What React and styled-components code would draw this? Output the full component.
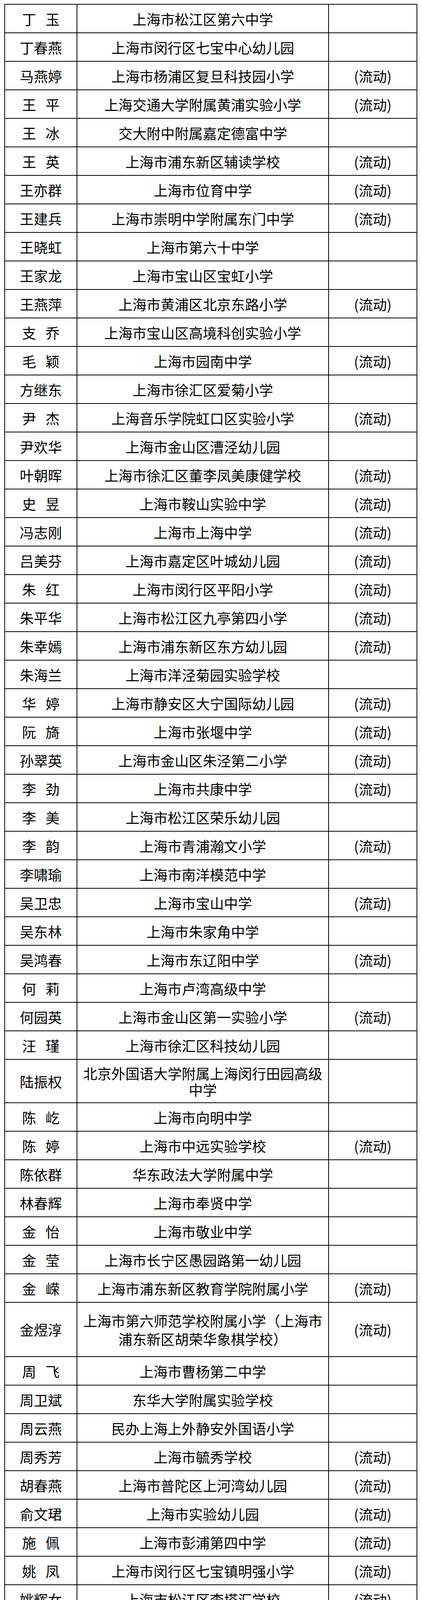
import React from 'react'
import styled, { createGlobalStyle } from 'styled-components'

const FLOW = '(流动)'

// [name, school, note, row height, line height]
const rows = [
    ['丁 玉', '上海市松江区第六中学', ''],
    ['丁春燕', '上海市闵行区七宝中心幼儿园', ''],
    ['马燕婷', '上海市杨浦区复旦科技园小学', FLOW],
    ['王 平', '上海交通大学附属黄浦实验小学', FLOW],
    ['王 冰', '交大附中附属嘉定德富中学', ''],
    ['王 英', '上海市浦东新区辅读学校', FLOW],
    ['王亦群', '上海市位育中学', FLOW],
    ['王建兵', '上海市崇明中学附属东门中学', FLOW],
    ['王晓虹', '上海市第六十中学', ''],
    ['王家龙', '上海市宝山区宝虹小学', ''],
    ['王燕萍', '上海市黄浦区北京东路小学', FLOW],
    ['支 乔', '上海市宝山区高境科创实验小学', ''],
    ['毛 颖', '上海市园南中学', FLOW],
    ['方继东', '上海市徐汇区爱菊小学', ''],
    ['尹 杰', '上海音乐学院虹口区实验小学', FLOW],
    ['尹欢华', '上海市金山区漕泾幼儿园', ''],
    ['叶朝晖', '上海市徐汇区董李凤美康健学校', FLOW],
    ['史 昱', '上海市鞍山实验中学', FLOW],
    ['冯志刚', '上海市上海中学', FLOW],
    ['吕美芬', '上海市嘉定区叶城幼儿园', FLOW],
    ['朱 红', '上海市闵行区平阳小学', FLOW],
    ['朱平华', '上海市松江区九亭第四小学', FLOW],
    ['朱幸嫣', '上海市浦东新区东方幼儿园', FLOW],
    ['朱海兰', '上海市洋泾菊园实验学校', ''],
    ['华 婷', '上海市静安区大宁国际幼儿园', FLOW],
    ['阮 旖', '上海市张堰中学', FLOW],
    ['孙翠英', '上海市金山区朱泾第二小学', FLOW],
    ['李 劲', '上海市共康中学', FLOW],
    ['李 美', '上海市松江区荣乐幼儿园', ''],
    ['李 韵', '上海市青浦瀚文小学', FLOW],
    ['李啸瑜', '上海市南洋模范中学', ''],
    ['吴卫忠', '上海市宝山中学', FLOW],
    ['吴东林', '上海市朱家角中学', ''],
    ['吴鸿春', '上海市东辽阳中学', FLOW],
    ['何 莉', '上海市卢湾高级中学', ''],
    ['何园英', '上海市金山区第一实验小学', FLOW],
    ['汪 瑾', '上海市徐汇区科技幼儿园', ''],
    ['陆振权', '北京外国语大学附属上海闵行田园高级中学', '', 111],
    ['陈 屹', '上海市向明中学', ''],
    ['陈 婷', '上海市中远实验学校', FLOW],
    ['陈依群', '华东政法大学附属中学', ''],
    ['林春辉', '上海市奉贤中学', ''],
    ['金 怡', '上海市敬业中学', ''],
    ['金 莹', '上海市长宁区愚园路第一幼儿园', ''],
    ['金 嵘', '上海市浦东新区教育学院附属小学', FLOW],
    ['金煜淳', '上海市第六师范学校附属小学（上海市浦东新区胡荣华象棋学校）', FLOW, 139, 47],
    ['周 飞', '上海市曹杨第二中学', ''],
    ['周卫斌', '东华大学附属实验学校', ''],
    ['周云燕', '民办上海上外静安外国语小学', ''],
    ['周秀芳', '上海市毓秀学校', FLOW],
    ['胡春燕', '上海市普陀区上河湾幼儿园', FLOW],
    ['俞文珺', '上海市实验幼儿园', FLOW],
    ['施 佩', '上海市彭浦第四中学', FLOW],
    ['姚 凤', '上海市闵行区七宝镇明强小学', FLOW],
    ['姚辉女', '上海市松江区李塔汇学校', FLOW],
    ['骆 奇', '上海市晋元高级中学附属学校', ''],
    ['顾 文', '上海交通大学附属小学', FLOW],
    ['顾伟毅', '上海市虹口区实验幼儿园', ''],
    ['顾霁昀', '上海市洋泾中学', ''],
    ['钱 芳', '上海市浦东新区福山外国语小学', ''],
    ['钱文华', '上海市徐汇区青少年活动中心', ''],
    ['徐秀清', '上海市青浦佳佳幼儿园', FLOW],
    ['高 洁', '上海市宜川中学', ''],
    ['席 璐', '上海外国语大学尚阳外国语学校', FLOW],
    ['唐月华', '上海市嘉定区清水路小学', FLOW],
    ['唐纪瑛', '上海市信息管理学校', ''],
    ['黄豪芳', '上海市宝山区青苹果幼儿园', ''],
    ['梅宝红', '上海市闵行区七宝第二中学', FLOW],
    ['曹湘瑜', '上海市浦东新区东南幼儿园', FLOW],
    ['董永刚', '上海市上南中学南校', ''],
    ['董永华', '上海第二工业大学附属浦东振华外经职业技术学校', '', 111],
    ['傅 松', '华东政法大学附属中学', ''],
    ['焦 勤', '华东师范大学附属天山学校', FLOW],
    ['谢红新', '上海市松江区民乐学校', FLOW],
    ['管建平', '上海市浦东新区御桥小学', ''],
    ['潘阿芳', '上海金洲小学', ''],
    ['薛志明', '华东师范大学附属东昌中学', ''],
    ['魏 澜', '上海市建平实验中学', '']
]

const GlobalStyle = createGlobalStyle`
    html, body {
        margin: 0;
        padding: 0;
        background: #fff;
    }
    body {
        font-family: "Noto Sans CJK SC", "Noto Sans", sans-serif;
        color: #000;
    }
`

const Page = styled.div`
    width: 1080px;
    height: 5858px;
    overflow: hidden;
    padding: 10px 0 0 11px;
    box-sizing: border-box;
`

const Table = styled.div`
    display: flex;
    flex-direction: column;
    width: 1057px;
    border-top: 2px solid #000;
    border-left: 2px solid #000;
    box-sizing: border-box;
`

const Row = styled.div`
    display: grid;
    grid-template-columns: 185px 644px 226px;
    height: ${p => p.$h}px;
`

const Cell = styled.div`
    display: flex;
    align-items: center;
    justify-content: center;
    box-sizing: border-box;
    padding: 0 10px;
    border-right: 2px solid #000;
    border-bottom: 2px solid #000;
    font-size: 36px;
    line-height: ${p => p.$lh}px;
    text-align: center;
`

const NameCell = styled(Cell)`
    word-spacing: 16px;
    white-space: nowrap;
`

const SchoolCell = styled(Cell)`
    line-break: strict;
`

const NoteCell = styled(Cell)`
    white-space: nowrap;
`

const App = () => {
    return (
        <Page>
            <GlobalStyle />
            <Table>
                {rows.map(([name, school, note, h = 73, lh = 42]) => (
                    <Row key={name} $h={h}>
                        <NameCell $lh={lh}>{name}</NameCell>
                        <SchoolCell $lh={lh}>{school}</SchoolCell>
                        <NoteCell $lh={lh}>{note}</NoteCell>
                    </Row>
                ))}
            </Table>
        </Page>
    )
}

export default App
